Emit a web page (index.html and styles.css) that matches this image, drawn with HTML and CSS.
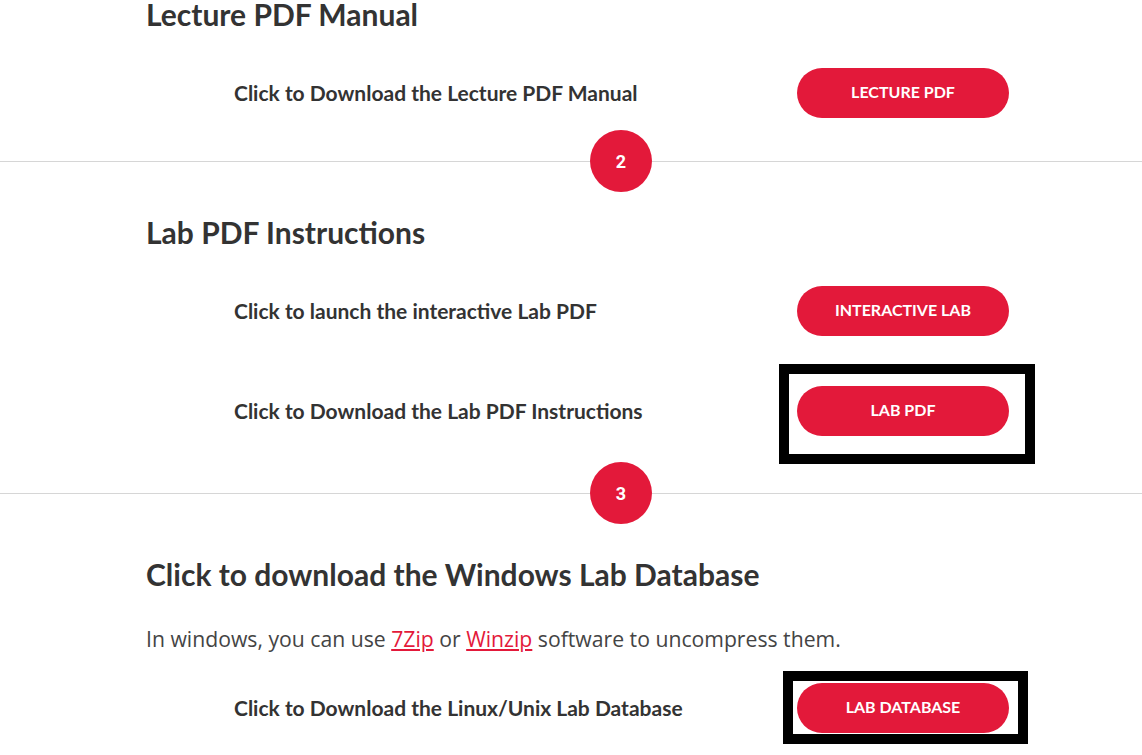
FILE: index.html
```html
<!DOCTYPE html>
<html lang="en">
<head>
<meta charset="utf-8">
<title>Lab Resources</title>
<link rel="stylesheet" href="styles.css">
</head>
<body>
<main class="page">
  <section class="block block-first">
    <h2 class="title title-first">Lecture PDF Manual</h2>
    <div class="row row-first">
      <span class="label">Click to Download the Lecture PDF Manual</span>
      <span class="btn-wrap"><a class="btn" href="#">LECTURE PDF</a></span>
    </div>
  </section>

  <div class="divider divider-a"><span class="step">2</span></div>

  <section class="block">
    <h2 class="title title-second">Lab PDF Instructions</h2>
    <div class="row row-first">
      <span class="label">Click to launch the interactive Lab PDF</span>
      <span class="btn-wrap"><a class="btn" href="#">INTERACTIVE LAB</a></span>
    </div>
    <div class="row row-next">
      <span class="label">Click to Download the Lab PDF Instructions</span>
      <span class="btn-wrap"><a class="btn" href="#">LAB PDF</a><span class="mark mark-a"></span></span>
    </div>
  </section>

  <div class="divider divider-b"><span class="step">3</span></div>

  <section class="block">
    <h2 class="title title-third">Click to download the Windows Lab Database</h2>
    <p class="note">In windows, you can use <a href="#">7Zip</a> or <a href="#">Winzip</a> software to uncompress them.</p>
    <div class="row row-last">
      <span class="label">Click to Download the Linux/Unix Lab Database</span>
      <span class="btn-wrap"><a class="btn" href="#">LAB DATABASE</a><span class="mark mark-b"></span></span>
    </div>
  </section>
</main>
</body>
</html>
```

FILE: styles.css
```css
html, body {
  margin: 0;
  padding: 0;
  background: #fff;
}

body {
  font-family: Lato, "Liberation Sans", sans-serif;
  color: #333;
}

.page {
  width: 1142px;
  padding-bottom: 40px;
}

.block {
  padding-left: 146px;
}

.title {
  margin: 0;
  font-size: 30px;
  line-height: 32px;
  font-weight: 700;
  color: #333;
}

.title-first { margin-top: -2px; }
.title-second { margin-top: 24px; }
.title-third { margin-top: 34px; }

.row {
  display: grid;
  grid-template-columns: 563px 212px;
  align-items: center;
  padding-left: 88px;
  height: 50px;
}

.row-first { margin-top: 38px; }
.row-next { margin-top: 50px; }
.row-last { margin-top: 29px; }

.label {
  font-size: 21px;
  line-height: 24px;
  font-weight: 700;
  color: #333;
}

.btn-wrap {
  position: relative;
  display: block;
  width: 212px;
  height: 50px;
}

.btn {
  display: flex;
  align-items: center;
  justify-content: center;
  box-sizing: border-box;
  width: 212px;
  height: 50px;
  padding-bottom: 3px;
  border-radius: 25px;
  background: #e3193a;
  color: #fff;
  font-size: 16px;
  font-weight: 700;
  text-decoration: none;
}

.mark {
  position: absolute;
  border: 10px solid #000;
  box-sizing: border-box;
  pointer-events: none;
}

.mark-a {
  left: -18px;
  top: -22px;
  width: 256px;
  height: 100px;
}

.mark-b {
  left: -14px;
  top: -12px;
  width: 245px;
  height: 73px;
}

.divider {
  display: flex;
  align-items: center;
  height: 62px;
}

.divider::before,
.divider::after {
  content: "";
  height: 1px;
  background: #d6d6d6;
}

.divider::before {
  flex: 0 0 590px;
}

.divider::after {
  flex: 1;
}

.divider-a { margin-top: 12px; }
.divider-b { margin-top: 26px; }

.step {
  width: 62px;
  height: 62px;
  border-radius: 50%;
  background: #e3193a;
  color: #fff;
  display: flex;
  align-items: center;
  justify-content: center;
  font-family: Roboto, "Liberation Sans", sans-serif;
  font-weight: 700;
  font-size: 18px;
}

.note {
  margin: 34px 0 0;
  font-family: "Open Sans", "Liberation Sans", sans-serif;
  font-size: 21.2px;
  line-height: 30px;
  color: #444;
}

.note a {
  color: #e3193a;
  text-decoration: underline;
}
```
